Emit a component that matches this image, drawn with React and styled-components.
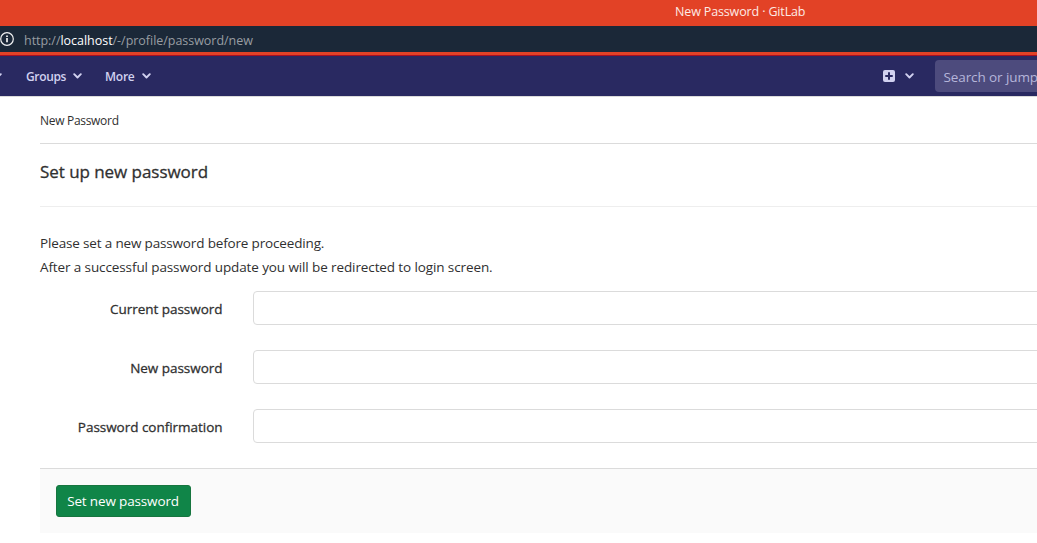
import React from "react";
import styled, { createGlobalStyle } from "styled-components";

const GlobalStyle = createGlobalStyle`
  *, *::before, *::after { box-sizing: border-box; }
  body {
    margin: 0;
    background: #fff;
    color: #303030;
    font-family: "Open Sans", "Noto Sans", sans-serif;
    font-size: 13.5px;
    overflow: hidden;
  }
`;

const Window = styled.div`
  width: 100%;
  height: 543px;
  overflow: hidden;
`;

const TitleBar = styled.div`
  height: 26px;
  padding-left: 675px;
  background: #e24226;
  color: #fdeae5;
  font-size: 12.5px;
  line-height: 23px;
  letter-spacing: -0.14px;
  white-space: nowrap;
`;

const AddressBar = styled.div`
  display: flex;
  align-items: center;
  height: 26px;
  background: #1b2838;
  color: #989da2;
`;

const InfoIcon = styled.svg`
  flex: none;
  width: 14px;
  height: 14px;
  margin-right: 10px;
`;

const Url = styled.div`
  padding-top: 3px;
  font-size: 12.5px;
  line-height: 26px;
  letter-spacing: -0.03px;
  white-space: nowrap;
`;

const Host = styled.span`
  color: #fff;
`;

const Accent = styled.div`
  height: 3px;
  background: #e24226;
`;

const NavBar = styled.nav`
  display: flex;
  align-items: center;
  height: 41px;
  padding-bottom: 1px;
  background: #292961;
  border-top: 1px solid #a80f22;
  color: #d1d1f0;
`;

const NavItem = styled.div`
  display: flex;
  align-items: center;
  justify-content: space-between;
  flex: none;
  width: ${(p) => p.$width}px;
  margin-left: ${(p) => p.$gap}px;
  padding-top: 1px;
  font-size: 12px;
  font-weight: 600;
  line-height: 20px;
  letter-spacing: ${(p) => p.$track || 0}px;
`;

const NavLabel = styled.span`
  padding-top: 2px;
`;

const Chevron = styled.svg`
  flex: none;
  width: 9px;
  height: 6px;
`;

const Search = styled.div`
  flex: none;
  width: 240px;
  height: 32px;
  margin-left: 21px;
  padding-left: 9px;
  border-radius: 4px;
  background: #4d4b7d;
  color: #b5b5da;
  line-height: 34px;
  letter-spacing: -0.1px;
  white-space: nowrap;
`;

const Content = styled.div`
  border-top: 1px solid #dbdbdb;
`;

const Page = styled.main`
  margin-left: 40px;
`;

const Breadcrumb = styled.div`
  height: 47px;
  border-bottom: 1px solid #dbdbdb;
  font-size: 12px;
  line-height: 47px;
  letter-spacing: -0.3px;
`;

const Heading = styled.h1`
  height: 63px;
  margin: 0;
  border-bottom: 1px solid #eee;
  font-size: 17px;
  font-weight: 400;
  line-height: 56px;
  letter-spacing: -0.05px;
  -webkit-text-stroke: 0.3px currentColor;
`;

const Intro = styled.p`
  margin: 0;
  padding-top: 24px;
  line-height: 24px;
  white-space: nowrap;
`;

const Line = styled.span`
  display: block;
  letter-spacing: ${(p) => p.$track || 0}px;
`;

const Field = styled.label`
  display: grid;
  grid-template-columns: 183px 1000px;
  column-gap: 30px;
  height: 34px;
  margin-bottom: 25px;
`;

const FieldName = styled.span`
  padding-right: 0.5px;
  text-align: right;
  line-height: 36px;
  letter-spacing: -0.03px;
  -webkit-text-stroke: 0.28px currentColor;
`;

const Input = styled.input`
  height: 34px;
  border: 1px solid #dbdbdb;
  border-radius: 4px;
  background: #fff;
  outline: none;
`;

const Actions = styled.div`
  height: 65px;
  padding: 16px;
  border-top: 1px solid #dbdbdb;
  background: #fafafa;
`;

const Button = styled.button`
  width: 135px;
  height: 32px;
  padding: 0 1px 0 0;
  border: 1px solid #17753f;
  border-radius: 3px;
  background: #108548;
  color: #fff;
  font: inherit;
  line-height: 30px;
  letter-spacing: -0.15px;
`;

const Form = styled.form`
  padding-top: 12px;
`;

const Down = () => (
  <Chevron viewBox="0 0 9 6" fill="none" stroke="currentColor" strokeWidth="1.9" strokeLinecap="round" strokeLinejoin="round">
    <path d="M1.2 1.2 4.5 4.5 7.8 1.2" />
  </Chevron>
);

const PlusSquare = () => (
  <svg width="12" height="12" viewBox="0 0 12 12">
    <rect width="12" height="12" rx="2" fill="#d1d1f0" />
    <path d="M6 3v6M3 6h6" stroke="#292961" strokeWidth="2" strokeLinecap="round" />
  </svg>
);

const FIELDS = ["Current password", "New password", "Password confirmation"];

export default function App() {
  return (
    <Window>
      <GlobalStyle />
      <TitleBar>New Password · GitLab</TitleBar>
      <AddressBar>
        <InfoIcon viewBox="0 0 14 14">
          <circle cx="7" cy="7" r="6.3" fill="none" stroke="#f1f2f3" strokeWidth="1.2" />
          <path d="M7 6v4.3M7 3.4v1.7" stroke="#f1f2f3" strokeWidth="1.7" />
        </InfoIcon>
        <Url>http://<Host>localhost</Host>/-/profile/password/new</Url>
      </AddressBar>
      <Accent />
      <NavBar>
        <NavItem $width={2} $gap={-7}><Down /></NavItem>
        <NavItem $width={55.5} $gap={31} $track={-0.35}><NavLabel>Groups</NavLabel><Down /></NavItem>
        <NavItem $width={45.5} $gap={23.5} $track={-0.25}><NavLabel>More</NavLabel><Down /></NavItem>
        <NavItem $width={30.5} $gap={732.5}><PlusSquare /><Down /></NavItem>
        <Search>Search or jump to…</Search>
      </NavBar>
      <Content>
        <Page>
          <Breadcrumb>New Password</Breadcrumb>
          <Heading>Set up new password</Heading>
          <Intro>
            <Line $track={-0.16}>Please set a new password before proceeding.</Line>
            <Line $track={-0.11}>After a successful password update you will be redirected to login screen.</Line>
          </Intro>
          <Form>
            {FIELDS.map((name) => (
              <Field key={name}>
                <FieldName>{name}</FieldName>
                <Input type="password" />
              </Field>
            ))}
            <Actions><Button type="button">Set new password</Button></Actions>
          </Form>
        </Page>
      </Content>
    </Window>
  );
}
